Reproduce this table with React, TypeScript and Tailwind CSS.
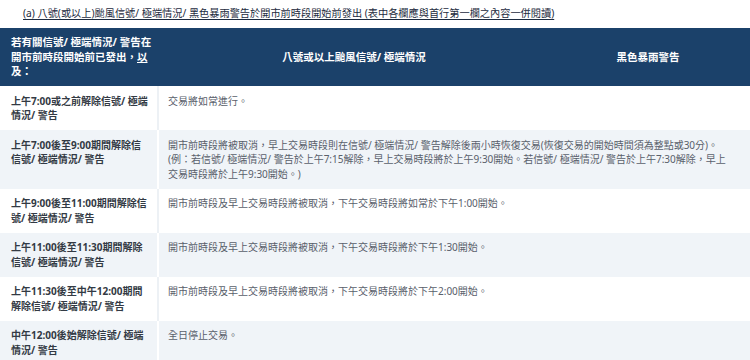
import React from "react";

const font = { fontFamily: "'Noto Sans', 'Noto Sans CJK TC', sans-serif" };

const rows: { label: React.ReactNode; text: React.ReactNode; gray: boolean }[] = [
  {
    label: (
      <>
        上午7:00或之前解除信號/ 極端
        <br />
        情況/ 警告
      </>
    ),
    text: "交易將如常進行。",
    gray: false,
  },
  {
    label: (
      <>
        上午7:00後至9:00期間解除信
        <br />
        信號/ 極端情況/ 警告
      </>
    ),
    text: (
      <>
        開市前時段將被取消，早上交易時段則在信號/ 極端情況/ 警告解除後兩小時恢復交易(恢復交易的開始時間須為整點或30分)。
        <br />
        (例：若信號/ 極端情況/ 警告於上午7:15解除，早上交易時段將於上午9:30開始。若信號/ 極端情況/ 警告於上午7:30解除，早上
        <br />
        交易時段將於上午9:30開始。)
      </>
    ),
    gray: true,
  },
  {
    label: (
      <>
        上午9:00後至11:00期間解除信
        <br />
        號/ 極端情況/ 警告
      </>
    ),
    text: "開市前時段及早上交易時段將被取消，下午交易時段將如常於下午1:00開始。",
    gray: false,
  },
  {
    label: (
      <>
        上午11:00後至11:30期間解除
        <br />
        信號/ 極端情況/ 警告
      </>
    ),
    text: "開市前時段及早上交易時段將被取消，下午交易時段將於下午1:30開始。",
    gray: true,
  },
  {
    label: (
      <>
        上午11:30後至中午12:00期間
        <br />
        解除信號/ 極端情況/ 警告
      </>
    ),
    text: "開市前時段及早上交易時段將被取消，下午交易時段將於下午2:00開始。",
    gray: false,
  },
  {
    label: (
      <>
        中午12:00後始解除信號/ 極端
        <br />
        情況/ 警告
      </>
    ),
    text: "全日停止交易。",
    gray: true,
  },
];

export default function App() {
  return (
    <div className="w-[750px] h-[360px] overflow-hidden bg-white" style={font}>
      <div className="h-[28px] pl-[23px] pt-[6px] text-[10.2px] leading-[15px] text-[#1d2b40] whitespace-nowrap">
        <span className="underline underline-offset-2">
          (a) 八號(或以上)颱風信號/ 極端情況/ 黑色暴雨警告於開市前時段開始前發出 (表中各欄應與首行第一欄之內容一併閱讀)
        </span>
      </div>
      <table className="w-[750px] table-fixed border-collapse">
        <colgroup>
          <col className="w-[158px]" />
          <col className="w-[388px]" />
          <col className="w-[204px]" />
        </colgroup>
        <thead>
          <tr className="bg-[#1b416a] text-white font-bold text-[10.5px] leading-[14.5px]">
            <th className="h-[58px] text-left align-middle pl-[11px] pr-0 py-[7px] font-bold whitespace-nowrap">
              若有關信號/ 極端情況/ 警告在
              <br />
              開市前時段開始前已發出，
              <span className="underline">以</span>
              <br />
              及：
            </th>
            <th className="text-center align-middle font-bold pl-[4px]">八號或以上颱風信號/ 極端情況</th>
            <th className="text-center align-middle font-bold">黑色暴雨警告</th>
          </tr>
        </thead>
        <tbody>
          {rows.map((r, i) => (
            <tr key={i} className={r.gray ? "bg-[#f0f4f8]" : "bg-white"}>
              <td
                className={
                  "align-top pl-[11px] pr-0 py-[7.5px] text-[10px] leading-[14.5px] font-bold text-[#333a44] whitespace-nowrap border-r-2 " +
                  (r.gray ? "border-white" : "border-[#edf1f5]")
                }
              >
                {r.label}
              </td>
              <td
                colSpan={2}
                className="align-top pl-[9px] pr-[8px] py-[7.5px] text-[10px] leading-[14.5px] text-[#59606b] whitespace-nowrap"
              >
                {r.text}
              </td>
            </tr>
          ))}
        </tbody>
      </table>
    </div>
  );
}
